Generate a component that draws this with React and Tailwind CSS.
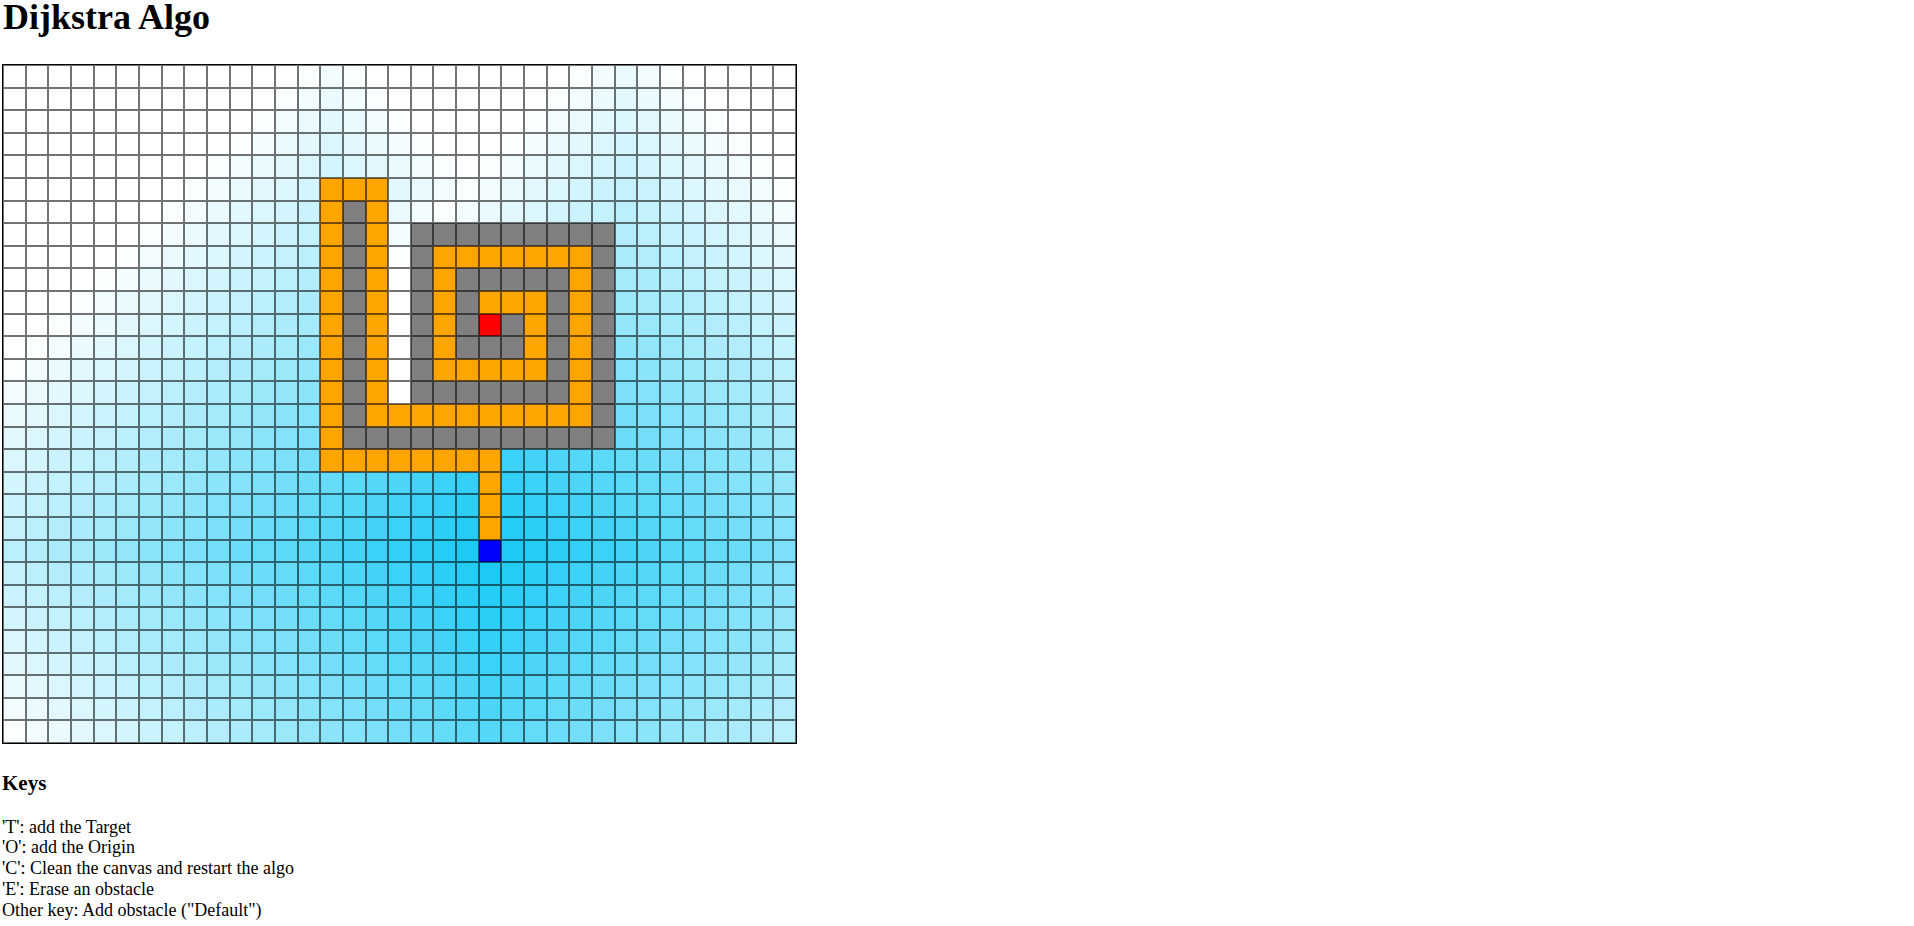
import React from 'react';

const COLS = 35;
const ROWS = 30;
const ORIGIN = [21, 21];
const TARGET = [21, 11];

// [col0, row0, col1, row1] inclusive segments
const WALLS = [
  [15, 6, 15, 16],
  [15, 16, 26, 16],
  [26, 7, 26, 16],
  [18, 7, 26, 7],
  [18, 7, 18, 14],
  [18, 14, 24, 14],
  [24, 9, 24, 14],
  [20, 9, 24, 9],
  [20, 9, 20, 12],
  [20, 12, 22, 12],
  [22, 11, 22, 12],
];

const PATH = [
  [21, 17, 21, 20],
  [14, 17, 21, 17],
  [14, 5, 14, 17],
  [14, 5, 16, 5],
  [16, 5, 16, 15],
  [16, 15, 25, 15],
  [25, 8, 25, 15],
  [19, 8, 25, 8],
  [19, 8, 19, 13],
  [19, 13, 23, 13],
  [23, 10, 23, 13],
  [21, 10, 23, 10],
];

const key = (c, r) => `${c},${r}`;

const fill = (segs) => {
  const s = new Set();
  segs.forEach(([c0, r0, c1, r1]) => {
    for (let c = c0; c <= c1; c++) for (let r = r0; r <= r1; r++) s.add(key(c, r));
  });
  return s;
};

const walls = fill(WALLS);
const path = fill(PATH);

// plain BFS from the origin, same as dijkstra on a uniform grid
const dist = {};
const queue = [ORIGIN];
dist[key(...ORIGIN)] = 0;
while (queue.length) {
  const [c, r] = queue.shift();
  const d = dist[key(c, r)];
  [[1, 0], [-1, 0], [0, 1], [0, -1]].forEach(([dc, dr]) => {
    const nc = c + dc;
    const nr = r + dr;
    if (nc < 0 || nr < 0 || nc >= COLS || nr >= ROWS) return;
    const k = key(nc, nr);
    if (walls.has(k) || k in dist) return;
    dist[k] = d + 1;
    queue.push([nc, nr]);
  });
}

const cellColor = (c, r) => {
  const k = key(c, r);
  if (c === ORIGIN[0] && r === ORIGIN[1]) return '#0000ff';
  if (c === TARGET[0] && r === TARGET[1]) return '#ff0000';
  if (walls.has(k)) return '#808080';
  if (path.has(k)) return '#ffa500';
  const d = dist[k] ?? 99;
  const t = Math.min(d / 29.5, 1);
  const mix = (a) => Math.round(a + (255 - a) * t);
  return `rgb(${mix(20)}, ${mix(200)}, ${mix(245)})`;
};

const keys = [
  "'T': add the Target",
  "'O': add the Origin",
  "'C': Clean the canvas and restart the algo",
  "'E': Erase an obstacle",
  'Other key: Add obstacle ("Default")',
];

export default function App() {
  const cells = [];
  for (let r = 0; r < ROWS; r++) {
    for (let c = 0; c < COLS; c++) {
      cells.push(
        <div
          key={key(c, r)}
          className="shadow-[inset_0_0_0_1px_rgba(0,0,0,0.55)]"
          style={{ backgroundColor: cellColor(c, r) }}
        />
      );
    }
  }

  return (
    <div className="min-h-screen bg-white text-black font-['Liberation_Serif','Times_New_Roman',serif] pl-[2px]">
      <h1 className="text-[36px] font-bold leading-[34px] pl-px">Dijkstra Algo</h1>

      {/* grid canvas */}
      <div className="mt-[30px] w-[795px] h-[680px] border border-black grid grid-cols-[repeat(35,minmax(0,1fr))] grid-rows-[repeat(30,minmax(0,1fr))]">
        {cells}
      </div>

      <h3 className="mt-[27px] text-[21px] font-bold leading-[24px]">Keys</h3>
      <div className="mt-[21.5px] text-[18px] leading-[20.9px]">
        {keys.map((k) => (
          <div key={k}>{k}</div>
        ))}
      </div>
    </div>
  );
}
